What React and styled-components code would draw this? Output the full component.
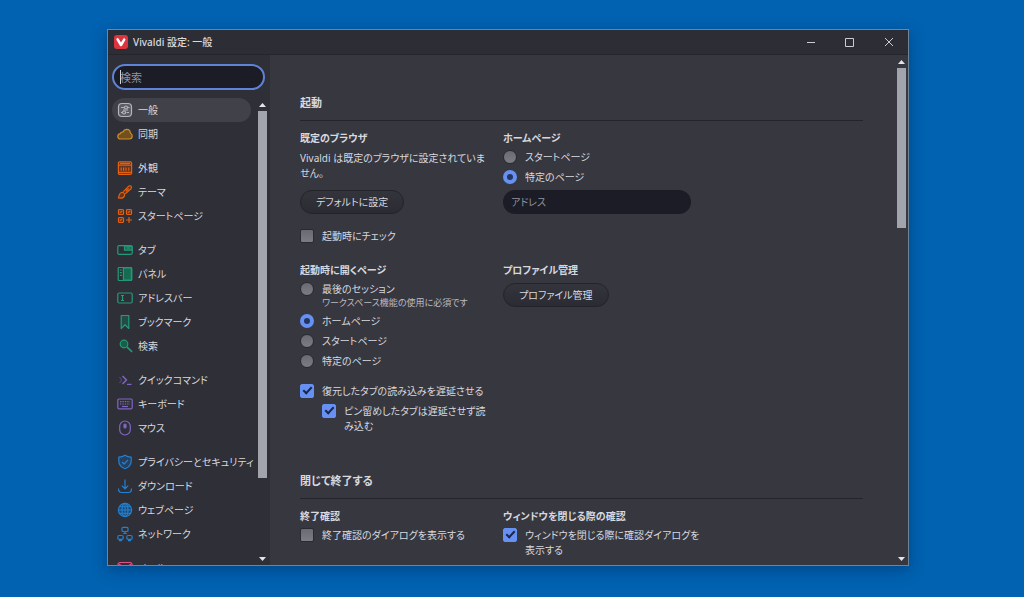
import React from "react";
import styled, { createGlobalStyle, css } from "styled-components";

const GlobalStyle = createGlobalStyle`
  *, *::before, *::after { box-sizing: border-box; }
  html, body { margin: 0; padding: 0; }
  body {
    background: #0062b1;
    color: #d8d9df;
    font-family: "Noto Sans", "Noto Sans CJK JP", sans-serif;
    font-size: 10px;
    line-height: 15px;
    font-feature-settings: "palt";
    overflow: hidden;
  }
  button, input { font: inherit; color: inherit; font-feature-settings: inherit; }
`;

const Desktop = styled.div`
  height: 100vh;
  padding: 29px 115px 31px 107px;
  display: flex;
`;

const Window = styled.section`
  flex: 1;
  min-width: 0;
  display: flex;
  flex-direction: column;
  overflow: hidden;
  border: 1px solid #6f8494;
  background: #373740;
  box-shadow: 0 4px 14px rgba(0, 20, 60, 0.35);
`;

const TitleBar = styled.header`
  flex: none;
  height: 25px;
  display: flex;
  align-items: center;
  padding-left: 6px;
  background: #2d2d35;
  border-bottom: 1px solid #25252c;
`;

const Title = styled.h1`
  flex: 1;
  margin: 0 0 0 5px;
  font-size: 10px;
  font-weight: 500;
`;

const WindowButton = styled.button`
  width: 39px;
  height: 24px;
  padding: 0;
  border: 0;
  background: none;
  display: flex;
  align-items: center;
  justify-content: center;
`;

const Body = styled.div`
  flex: 1;
  min-height: 0;
  display: flex;
`;

const Sidebar = styled.aside`
  flex: none;
  width: 162px;
  padding: 9px 0 0 4px;
  display: flex;
  flex-direction: column;
  background: #2f2f38;
`;

const Field = styled.input`
  display: block;
  height: 24px;
  width: 100%;
  padding: 0 8px;
  border: 0;
  border-radius: 12px;
  background: #1b1c26;
  outline: none;
  &::placeholder { color: #9293a0; opacity: 1; }
`;

const SearchBox = styled.div`
  position: relative;
  flex: none;
  margin: 0 5px 8px 0;
`;

const SearchField = styled(Field)`
  height: 26px;
  padding: 0 6px;
  border: 2px solid #5f83d6;
  border-radius: 13px;
  font-size: 11px;
`;

const Caret = styled.span`
  position: absolute;
  left: 8px;
  top: 6px;
  width: 1px;
  height: 14px;
  background: #d2d3d9;
`;

const ListArea = styled.div`
  flex: 1;
  min-height: 0;
  display: flex;
`;

const Nav = styled.nav`
  flex: 1;
  min-width: 0;
  overflow: hidden;
`;

const NavGroup = styled.div`
  margin-bottom: 10px;
`;

const NavItem = styled.a`
  display: flex;
  align-items: center;
  gap: 5px;
  height: 24px;
  width: 139px;
  padding-left: 5px;
  border-radius: 12px;
  color: inherit;
  white-space: nowrap;
  text-decoration: none;
  background: ${(p) => (p.$active ? "#41414a" : "none")};
`;

const Glyph = styled.svg`
  flex: none;
  width: 16px;
  height: 16px;
  fill: none;
  stroke: currentColor;
  stroke-width: 1.2;
  stroke-linejoin: round;
  color: ${(p) => p.$color};
`;

const Bar = styled.div`
  flex: none;
  width: 11px;
  margin: ${(p) => p.$margin};
  display: flex;
  flex-direction: column;
  align-items: center;
`;

const Track = styled.div`
  flex: 1;
  width: 9px;
`;

const Thumb = styled.div`
  height: ${(p) => p.$size};
  background: #a2a4ad;
`;

const Arrow = styled.svg`
  width: 7px;
  height: 4px;
  margin: 4px 0;
  fill: #e4e4e8;
`;

const Main = styled.main`
  flex: 1;
  min-width: 0;
  padding: 38px 33px 0 30px;
  overflow: hidden;
`;

const Section = styled.section`
  margin-bottom: 34px;
`;

const SectionTitle = styled.h2`
  margin: 0 0 7px;
  padding-bottom: 7px;
  font-size: 11px;
  line-height: 20px;
  font-weight: 700;
  border-bottom: 1px solid #24242b;
`;

const Grid = styled.div`
  display: grid;
  grid-template-columns: repeat(auto-fill, 188px);
  gap: 13px 15px;
`;

const Group = styled.div`
  min-width: 0;
`;

const GroupTitle = styled.h3`
  margin: 0;
  font-size: 10px;
  line-height: 20px;
  font-weight: 700;
`;

const Text = styled.p`
  margin: 3px 0 9px;
  white-space: nowrap;
`;

const PillButton = styled.button`
  display: block;
  height: 24px;
  padding: 0 15px;
  margin: 3px 0 0;
  border: 1px solid #23232a;
  border-radius: 12px;
  background: linear-gradient(#34343d, #2b2b33);
  white-space: nowrap;
`;

const Option = styled.label`
  display: flex;
  gap: 8px;
  padding: 2px 0 3px;
  margin-top: ${(p) => p.$before || 0}px;
  margin-left: ${(p) => (p.$nested ? 22 : 0)}px;
  white-space: nowrap;
`;

const Note = styled.small`
  display: block;
  font-size: 9px;
  line-height: 12px;
  color: #b9bac2;
`;

const control = css`
  appearance: none;
  flex: none;
  display: grid;
  place-items: center;
  width: 14px;
  height: 14px;
  margin: 0;
  border: 1px solid #2a2a31;
  background: linear-gradient(#6a6a72, #7c7c84);
`;

const Radio = styled.input.attrs({ type: "radio" })`
  ${control}
  border-radius: 50%;
  &:checked { border: 4px solid #6690f2; background: #25355f; }
`;

const Check = styled.input.attrs({ type: "checkbox" })`
  ${control}
  border-radius: 2px;
  &:checked { border-color: #6690f2; background: #6690f2; }
  &:checked::after {
    content: "";
    width: 9px;
    height: 5px;
    margin-bottom: 3px;
    border: solid #1c2748;
    border-width: 0 0 2px 2px;
    transform: rotate(-47deg);
  }
`;

const AddressField = styled(Field)`
  margin-top: 2px;
`;

const O = "#e2600f";
const G = "#219b78";
const P = "#8066c4";
const B = "#2281d2";

const icons = {
  general: <><rect x="1.5" y="1.5" width="13" height="13" rx="3.5" fill="#5c5d66" /><path d="M4 5.5h3M11 5.5h1.5M4 10.5h1M9.5 10.5H12M6 8h5" /><circle cx="9" cy="5.5" r="1.5" /><circle cx="7" cy="10.5" r="1.5" /></>,
  cloud: <path fill="#70501f" d="M3.6 13C1.8 13 .8 11.9 .8 10.4.8 8.9 1.9 7.8 3.5 7.7c.2-1.3 1.2-1.9 2.5-1.6C6.8 4.3 8.2 3.4 9.9 3.4c2.2 0 3.5 1.6 3.4 3.6 1.3.6 1.9 1.7 1.9 3 0 1.9-1.2 3-3 3Z" />,
  look: <><rect x="1.4" y="1.8" width="13.2" height="12.6" rx="1.2" fill="#64341f" /><path d="M1.5 5.2h13M3 3.5h10M4.2 7.5v3.2M6.6 7.5v3.2M9 7.5v3.2M11.8 7.5v3.2M2 12.4h12" /></>,
  brush: <><path fill="#64341f" d="M1.4 13.9C2 12 2 9.3 4.3 8.5c2-.7 4 1.2 3.2 3.2-.8 2.1-3.4 2.9-6.1 2.2Z" /><path fill="#64341f" d="M6.3 7.6 11.5 2.3c1-.9 2.3-.6 2.7.1.5.8.3 1.8-.4 2.6L8.3 9.8M8.8 7.2l2.8-2.7" /></>,
  start: <><g fill="#64341f"><rect x="1.5" y="1.5" width="5" height="5" rx="1" /><rect x="9.5" y="1.5" width="5" height="5" rx="1" /><rect x="1.5" y="9.5" width="5" height="5" rx="1" /></g><path d="M3 4.8 5 3M11 4.8 13 3M3 12.8 5 11M12 9v6M9 12h6" /></>,
  tab: <><rect x=".8" y="3.7" width="14.4" height="8.6" rx="1.2" /><path fill="#1a684f" d="M7.5 4v4.2H15V4.5Z" /><path d="M9.5 6h3.5" /></>,
  panel: <><rect x="1.2" y="1.5" width="13.6" height="13" rx="1" /><path fill="#176b51" d="M6.4 1.8h8v12.4h-8z" /><path d="M2.8 4h2M2.8 6.7h2M2.8 9.4h2" /></>,
  address: <><rect x=".8" y="3" width="14.4" height="10" rx="1.4" /><path d="M4 5.5h3M4 10.5h3M5.5 5.5v5" /></>,
  bookmark: <path fill="#254b46" d="M4.2 1.5h7.6v13L8 10.8l-3.8 3.7Z" />,
  search: <><circle cx="7" cy="6" r="3.8" fill="#175d4a" /><path d="m9.9 8.8 5.2 5" strokeWidth="1.6" /></>,
  quick: <><path d="m2.5 5 2.3 3-2.3 3" opacity=".45" /><path d="m5.5 4 4 4-4 4" strokeWidth="1.5" /><path d="M10 12.4h4.5" /></>,
  keyboard: <><rect x=".8" y="3" width="14.4" height="9.8" rx="1.2" /><path d="M3 5.6h10M3 8h10" strokeDasharray="1.4 1" /><path d="M5 10.5h6" /></>,
  mouse: <><rect x="2.7" y="1" width="10.6" height="14" rx="5.3" /><rect x="7" y="4" width="2" height="4" rx="1" fill="currentColor" /></>,
  shield: <><path d="M8 1.2c1.8 1.3 3.8 1.8 6.2 1.9v3.6c0 4-2.3 6.5-6.2 8-3.9-1.5-6.2-4-6.2-8V3.1C4.2 3 6.2 2.5 8 1.2Z" fill="#26405f" /><path d="m5 8 2.2 2 3.8-4.2" /></>,
  download: <path d="M8 1.5v9M4.8 7.6 8 10.8l3.2-3.2M1.5 10.5c0 3 .8 4 3 4h7c2.2 0 3-1 3-4" />,
  globe: <><circle cx="8" cy="8" r="6.6" fill="#21466b" /><ellipse cx="8" cy="8" rx="3" ry="6.6" /><path d="M1.4 8h13.2M2.6 4.7h10.8M2.6 11.3h10.8M8 1.4v13.2" strokeWidth="1" /></>,
  network: <><rect x="5" y="1.3" width="6" height="4.2" rx="1" /><rect x=".8" y="9.5" width="5.4" height="3.8" rx="1.4" /><rect x="9.8" y="9.5" width="5.4" height="3.8" rx="1.4" /><path d="M8 5.5v2.2M6.2 7.5h3.6M2 14.6h3M11 14.6h3" /></>,
  mail: <><rect x="1" y="2.5" width="14" height="11" rx="2" /><path d="m2 4 6 4.5L14 4" /></>,
};

const groups = [
  [["general", "一般", "#b3b4bc"], ["cloud", "同期", "#d08c24"]],
  [["look", "外観", O], ["brush", "テーマ", O], ["start", "スタートページ", O]],
  [["tab", "タブ", G], ["panel", "パネル", G], ["address", "アドレスバー", G], ["bookmark", "ブックマーク", G], ["search", "検索", G]],
  [["quick", "クイックコマンド", P], ["keyboard", "キーボード", P], ["mouse", "マウス", P]],
  [["shield", "プライバシーとセキュリティ", B], ["download", "ダウンロード", B], ["globe", "ウェブページ", B], ["network", "ネットワーク", B]],
  [["mail", "メール", "#e0508e"]],
];

function ScrollBar({ size, margin }) {
  return (
    <Bar $margin={margin} aria-hidden="true">
      <Arrow viewBox="0 0 7 4"><path d="M0 4 3.5 0 7 4Z" /></Arrow>
      <Track><Thumb $size={size} /></Track>
      <Arrow viewBox="0 0 7 4"><path d="M0 0h7L3.5 4Z" /></Arrow>
    </Bar>
  );
}

export default function App() {
  return (
    <>
      <GlobalStyle />
      <Desktop>
        <Window>
          <TitleBar>
            <svg width="14" height="14" viewBox="0 0 14 14" aria-hidden="true">
              <rect width="14" height="14" rx="3" fill="#dc3540" />
              <path d="M3.6 4.3 7 10l3.2-5.4" fill="none" stroke="#fff" strokeWidth="2.5" strokeLinecap="round" strokeLinejoin="round" />
            </svg>
            <Title>Vivaldi 設定: 一般</Title>
            <WindowButton aria-label="最小化"><svg width="10" height="10" stroke="#cccdd2"><path d="M1 5.5h8" /></svg></WindowButton>
            <WindowButton aria-label="最大化"><svg width="10" height="10" stroke="#cccdd2" fill="none"><path d="M.5 1.5h8v8h-8z" /></svg></WindowButton>
            <WindowButton aria-label="閉じる"><svg width="10" height="10" stroke="#cccdd2"><path d="m1 1 8 8M9 1 1 9" /></svg></WindowButton>
          </TitleBar>
          <Body>
            <Sidebar>
              <SearchBox>
                <SearchField type="text" placeholder="検索" aria-label="検索" />
                <Caret />
              </SearchBox>
              <ListArea>
                <Nav>
                  {groups.map((items, i) => (
                    <NavGroup key={i}>
                      {items.map(([icon, label, color]) => (
                        <NavItem key={icon} href={`#${icon}`} $active={icon === "general"}>
                          <Glyph viewBox="0 0 16 16" $color={color} aria-hidden="true">{icons[icon]}</Glyph>
                          {label}
                        </NavItem>
                      ))}
                    </NavGroup>
                  ))}
                </Nav>
                <ScrollBar size="83%" margin="1px 2px 0 0" />
              </ListArea>
            </Sidebar>
            <Main>
              <Section>
                <SectionTitle>起動</SectionTitle>
                <Grid>
                  <Group>
                    <GroupTitle>既定のブラウザ</GroupTitle>
                    <Text>Vivaldi は既定のブラウザに設定されていま<br />せん。</Text>
                    <PillButton>デフォルトに設定</PillButton>
                    <Option $before={13}><Check />起動時にチェック</Option>
                  </Group>
                  <Group>
                    <GroupTitle>ホームページ</GroupTitle>
                    <Option><Radio name="home" />スタートページ</Option>
                    <Option><Radio name="home" defaultChecked />特定のページ</Option>
                    <AddressField type="text" placeholder="アドレス" aria-label="アドレス" />
                  </Group>
                  <Group>
                    <GroupTitle>起動時に開くページ</GroupTitle>
                    <Option><Radio name="startup" /><span>最後のセッション<Note>ワークスペース機能の使用に必須です</Note></span></Option>
                    <Option><Radio name="startup" defaultChecked />ホームページ</Option>
                    <Option><Radio name="startup" />スタートページ</Option>
                    <Option><Radio name="startup" />特定のページ</Option>
                    <Option $before={10}><Check defaultChecked />復元したタブの読み込みを遅延させる</Option>
                    <Option $nested><Check defaultChecked /><span>ピン留めしたタブは遅延させず読<br />み込む</span></Option>
                  </Group>
                  <Group>
                    <GroupTitle>プロファイル管理</GroupTitle>
                    <PillButton>プロファイル管理</PillButton>
                  </Group>
                </Grid>
              </Section>
              <Section>
                <SectionTitle>閉じて終了する</SectionTitle>
                <Grid>
                  <Group>
                    <GroupTitle>終了確認</GroupTitle>
                    <Option><Check />終了確認のダイアログを表示する</Option>
                  </Group>
                  <Group>
                    <GroupTitle>ウィンドウを閉じる際の確認</GroupTitle>
                    <Option><Check defaultChecked /><span>ウィンドウを閉じる際に確認ダイアログを<br />表示する</span></Option>
                  </Group>
                </Grid>
              </Section>
            </Main>
            <ScrollBar size="33%" margin="1px 1px 0 0" />
          </Body>
        </Window>
      </Desktop>
    </>
  );
}
